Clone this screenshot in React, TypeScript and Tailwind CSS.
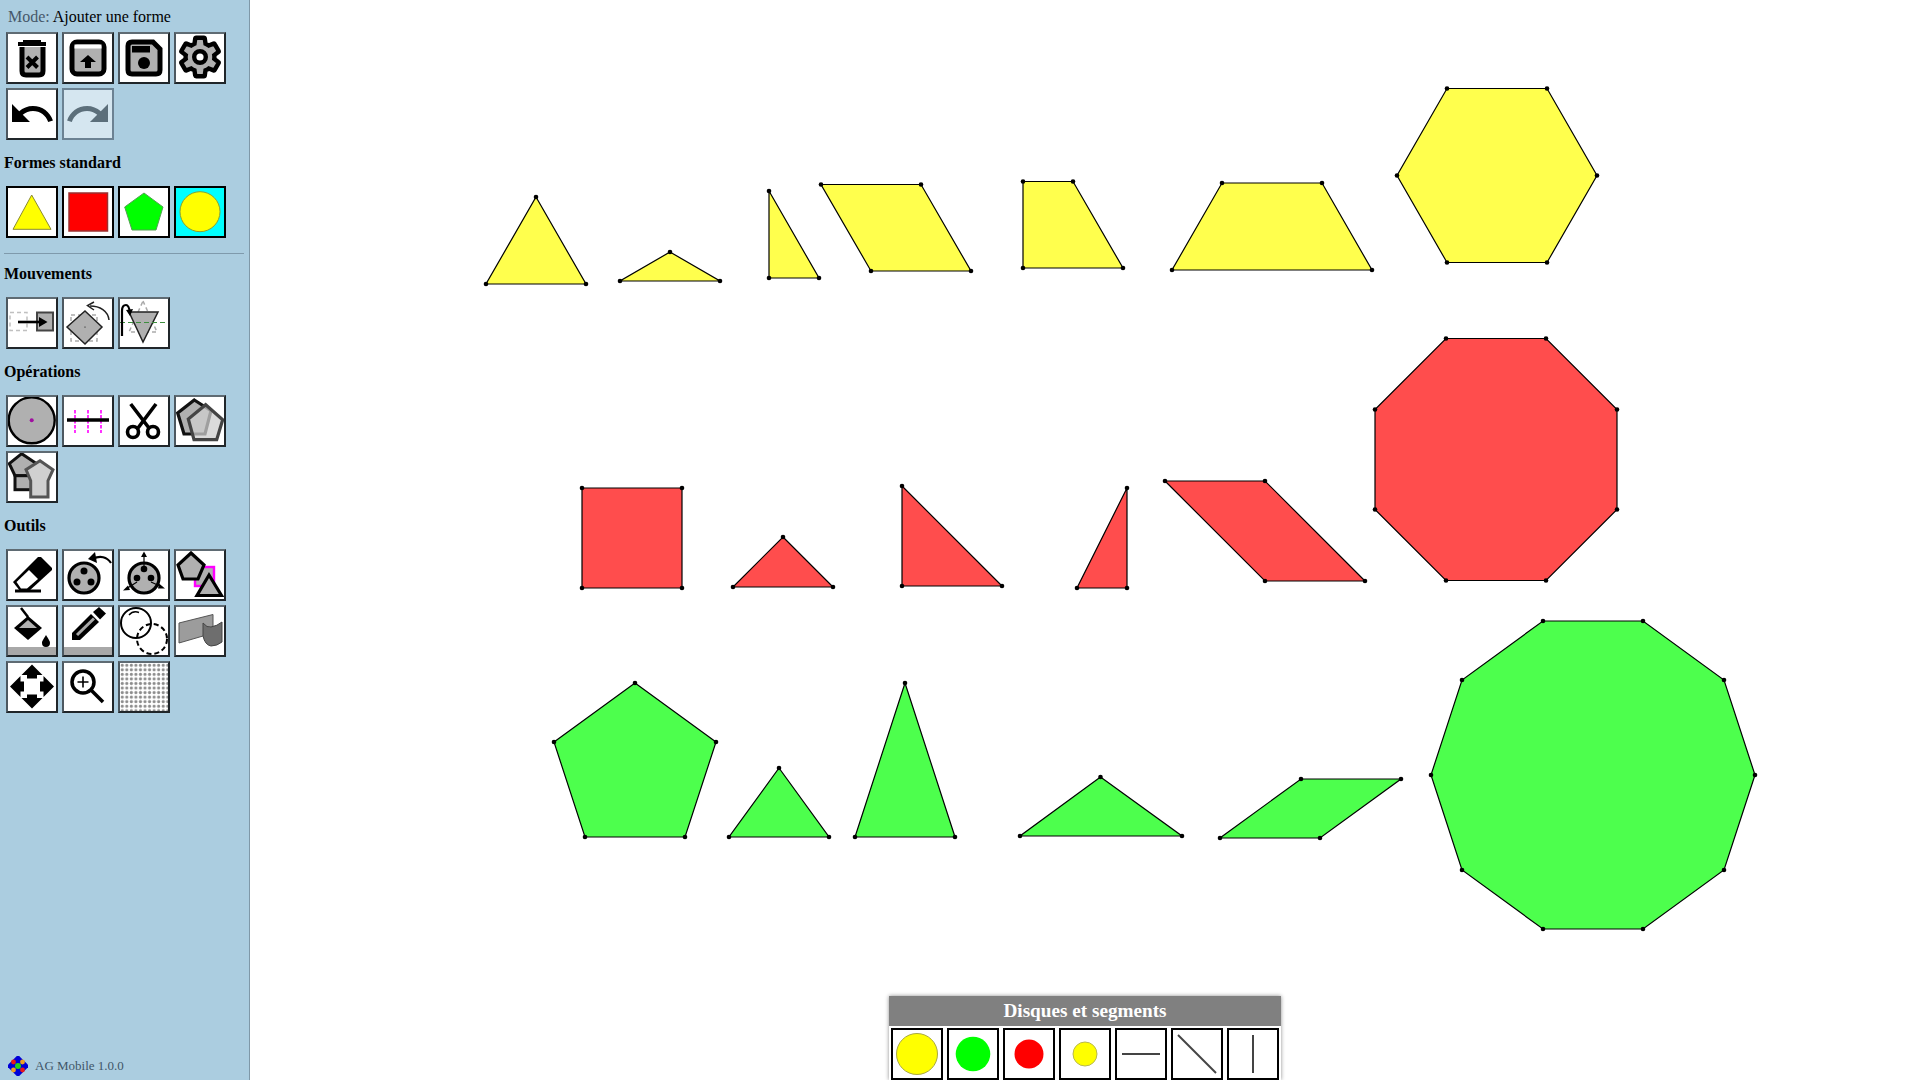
import React from 'react';

type Shape = { color: string; points: [number, number][] };

const YELLOW = '#ffff4d';
const RED = '#ff4d4d';
const GREEN = '#4dff4d';
const GRAY = '#b0b0b0';

const shapes: Shape[] = [
  { color: YELLOW, points: [[536, 197], [586, 284], [486, 284]] },
  { color: YELLOW, points: [[670, 252], [720, 281], [620, 281]] },
  { color: YELLOW, points: [[769, 191], [819, 278], [769, 278]] },
  { color: YELLOW, points: [[821, 184.5], [921, 184.5], [971, 271], [871, 271]] },
  { color: YELLOW, points: [[1023, 181.5], [1073, 181.5], [1123, 268], [1023, 268]] },
  { color: YELLOW, points: [[1222, 183], [1322, 183], [1372, 270], [1172, 270]] },
  { color: YELLOW, points: [[1447, 88.5], [1547, 88.5], [1597, 175.5], [1547, 262.5], [1447, 262.5], [1397, 175.5]] },
  { color: RED, points: [[582, 488], [682, 488], [682, 588], [582, 588]] },
  { color: RED, points: [[783, 537], [833, 587], [733, 587]] },
  { color: RED, points: [[902, 486], [1002, 586], [902, 586]] },
  { color: RED, points: [[1127, 488], [1127, 588], [1077, 588]] },
  { color: RED, points: [[1165, 481], [1265, 481], [1365, 581], [1265, 581]] },
  { color: RED, points: [[1446, 338.5], [1546, 338.5], [1617, 409.5], [1617, 509.5], [1546, 580.5], [1446, 580.5], [1375, 509.5], [1375, 409.5]] },
  { color: GREEN, points: [[635, 683], [716, 742], [685, 837], [585, 837], [554, 742]] },
  { color: GREEN, points: [[779, 768], [829, 837], [729, 837]] },
  { color: GREEN, points: [[905, 683], [955, 837], [855, 837]] },
  { color: GREEN, points: [[1100.5, 777], [1182, 836], [1020, 836]] },
  { color: GREEN, points: [[1301, 779], [1401, 779], [1320, 838], [1220, 838]] },
  { color: GREEN, points: [[1543, 621], [1643, 621], [1724, 680], [1755, 775], [1724, 870], [1643, 929], [1543, 929], [1462, 870], [1431, 775], [1462, 680]] },
];

const Icon = ({ children }: { children: React.ReactNode }) => (
  <svg viewBox="2 2 48 48" className="block w-12 h-12">
    {children}
  </svg>
);

const ToolButton = ({ children, variant = 'tool' }: { children: React.ReactNode; variant?: 'tool' | 'shape' | 'active' | 'off' }) => {
  const look = {
    tool: 'bg-white border-t-[#5f6b73] border-l-[#4d5860] border-r-[#20262a] border-b-[#20262a]',
    shape: 'bg-white border-black',
    active: 'bg-[#00ffff] border-black',
    off: 'bg-[#d5e6f0] border-[#6c8293]',
  }[variant];
  return <button className={`block box-border w-[52px] h-[52px] border-2 p-0 ${look}`}>{children}</button>;
};

const SectionTitle = ({ children }: { children: React.ReactNode }) => (
  <h2 className="h-[46px] flex items-center pl-1 text-base font-bold text-black">{children}</h2>
);

const Row = ({ children }: { children: React.ReactNode }) => (
  <div className="grid grid-cols-[repeat(4,52px)] gap-1 pl-[6px]">{children}</div>
);

const MoveHead = ({ r }: { r: number }) => (
  <polygon points="26,3.5 36.5,14 31,14 31,17.5 21,17.5 21,14 15.5,14" fill="#000" transform={`rotate(${r} 26 25.5)`} />
);

const Logo = () => (
  <svg viewBox="0 0 20 20" className="w-5 h-5 shrink-0">
    <rect x="6" y="0.5" width="8" height="8" fill="#0000d8" transform="rotate(45 10 4.5)" />
    <rect x="6" y="11.5" width="8" height="8" fill="#0000d8" transform="rotate(45 10 15.5)" />
    <rect x="0.5" y="6" width="8" height="8" fill="#0000d8" transform="rotate(45 4.5 10)" />
    <rect x="11.5" y="6" width="8" height="8" fill="#0000d8" transform="rotate(45 15.5 10)" />
    <circle cx="5.5" cy="6" r="2.4" fill="#e81818" />
    <circle cx="14.5" cy="6" r="2.4" fill="#f0a020" />
    <circle cx="5.5" cy="14" r="2.4" fill="#f0a020" />
    <circle cx="14.5" cy="14" r="2.4" fill="#e81818" />
    <circle cx="10" cy="10" r="3" fill="#20d020" />
  </svg>
);

const Sidebar = () => (
  <aside className="w-[250px] h-full shrink-0 flex flex-col bg-[#abcde0] border-r border-[#7f98a8]">
    <div className="h-8 flex items-center pl-2 pt-[2px] text-base text-black">
      <span className="text-[#46586a] mr-[3px]">Mode:</span>Ajouter une forme
    </div>
    <Row>
      <ToolButton>
        <Icon>
          <rect x="12" y="10" width="28" height="4" fill="#000" />
          <rect x="17" y="8" width="18" height="3" fill="#000" />
          <path d="M16 15 V39 Q16 43 20 43 H33 Q37 43 37 39 V15" fill={GRAY} stroke="#000" strokeWidth="5" />
          <path d="M21 25 L31.5 35.5 M31.5 25 L21 35.5" stroke="#000" strokeWidth="4" />
        </Icon>
      </ToolButton>
      <ToolButton>
        <Icon>
          <rect x="10" y="10" width="32" height="32" rx="5" fill={GRAY} stroke="#000" strokeWidth="5" />
          <rect x="12.5" y="12.5" width="27" height="4" fill="#fff" />
          <path d="M18 30 L26 23 L34 30 H29 V36 H23 V30 Z" fill="#000" />
        </Icon>
      </ToolButton>
      <ToolButton>
        <Icon>
          <path d="M14 10 H35 L42 17 V38 Q42 42 38 42 H14 Q10 42 10 38 V14 Q10 10 14 10 Z" fill={GRAY} stroke="#000" strokeWidth="5" />
          <rect x="14" y="14" width="18" height="6.5" fill="#000" />
          <circle cx="26" cy="31" r="6" fill="#000" />
        </Icon>
      </ToolButton>
      <ToolButton>
        <Icon>
          <g transform="translate(2 1) scale(2)">
            <path
              d="M19.14 12.94c.04-.3.06-.61.06-.94 0-.32-.02-.64-.07-.94l2.03-1.58c.18-.14.23-.41.12-.61l-1.92-3.32c-.12-.22-.37-.29-.59-.22l-2.39.96c-.5-.38-1.03-.7-1.62-.94l-.36-2.54c-.04-.24-.24-.41-.48-.41h-3.84c-.24 0-.43.17-.47.41l-.36 2.54c-.59.24-1.13.57-1.62.94l-2.39-.96c-.22-.08-.47 0-.59.22L2.74 8.87c-.12.21-.08.47.12.61l2.03 1.58c-.05.3-.09.63-.09.94s.02.64.07.94l-2.03 1.58c-.18.14-.23.41-.12.61l1.92 3.32c.12.22.37.29.59.22l2.39-.96c.5.38 1.03.7 1.62.94l.36 2.54c.05.24.24.41.48.41h3.84c.24 0 .44-.17.47-.41l.36-2.54c.59-.24 1.13-.56 1.62-.94l2.39.96c.22.08.47 0 .59-.22l1.92-3.32c.12-.22.07-.47-.12-.61l-2.01-1.58z"
              fill={GRAY}
              stroke="#000"
              strokeWidth="2.2"
            />
            <circle cx="12" cy="12" r="2.9" fill="#fff" stroke="#000" strokeWidth="2.2" />
          </g>
        </Icon>
      </ToolButton>
      <ToolButton>
        <Icon>
          <path
            transform="translate(2 2) scale(2)"
            d="M12.5 8c-2.65 0-5.05.99-6.9 2.6L2 7v9h9l-3.62-3.62c1.39-1.16 3.16-1.88 5.12-1.88 3.54 0 6.55 2.31 7.6 5.5l2.37-.78C21.08 11.03 17.15 8 12.5 8z"
            fill="#000"
          />
        </Icon>
      </ToolButton>
      <ToolButton variant="off">
        <Icon>
          <path
            transform="translate(2 2) scale(2)"
            d="M18.4 10.6C16.55 8.99 14.15 8 11.5 8c-4.65 0-8.58 3.03-9.96 7.22L3.9 16c1.05-3.19 4.05-5.5 7.6-5.5 1.95 0 3.73.72 5.12 1.88L13 16h9V7l-3.6 3.6z"
            fill="#5c6f7b"
          />
        </Icon>
      </ToolButton>
    </Row>

    <SectionTitle>Formes standard</SectionTitle>
    <Row>
      <ToolButton variant="shape">
        <Icon>
          <polygon points="25.7,9 7,43.3 45,43.3" fill="#ffff00" stroke="#8a8a30" strokeWidth="1" />
        </Icon>
      </ToolButton>
      <ToolButton variant="shape">
        <Icon>
          <rect x="7" y="7" width="38.5" height="38" fill="#ff0000" stroke="#9a3030" strokeWidth="1.5" />
        </Icon>
      </ToolButton>
      <ToolButton variant="shape">
        <Icon>
          <polygon points="26,7 45,21 38,44 14,44 6.7,21" fill="#00ff00" stroke="#50a050" strokeWidth="1" />
        </Icon>
      </ToolButton>
      <ToolButton variant="active">
        <Icon>
          <circle cx="26" cy="25.7" r="20" fill="#ffff00" stroke="#8aa030" strokeWidth="1" />
        </Icon>
      </ToolButton>
    </Row>
    <div className="h-px mt-[15px] ml-1 mr-[5px] bg-[#7f9aac]" />

    <h2 className="h-[43px] flex items-center pl-1 pb-[3px] text-base font-bold text-black">Mouvements</h2>
    <Row>
      <ToolButton>
        <Icon>
          <rect x="4" y="15.5" width="17" height="18" fill="none" stroke="#c0c0c0" strokeWidth="1.5" strokeDasharray="4 3" />
          <rect x="31" y="15.5" width="16" height="18" fill={GRAY} stroke="#444" strokeWidth="2" />
          <path d="M12 25 H36" stroke="#000" strokeWidth="2.6" />
          <polygon points="33,20 33,30 41.5,25" fill="#000" />
        </Icon>
      </ToolButton>
      <ToolButton>
        <Icon>
          <rect x="9" y="18" width="26" height="26" fill="none" stroke="#aaa" strokeWidth="1.5" strokeDasharray="4 3" />
          <polygon points="23,14 40,30 23,47 5,30" fill={GRAY} stroke="#222" strokeWidth="1.5" />
          <circle cx="23" cy="30" r="0.6" fill="#000" />
          <path d="M47 23 C46 14 38 9 28 9" fill="none" stroke="#222" strokeWidth="1.5" />
          <path d="M32 5 L25.5 8.5 L32 13" fill="none" stroke="#222" strokeWidth="1.5" />
        </Icon>
      </ToolButton>
      <ToolButton>
        <Icon>
          <polygon points="25,4 39,35 11,35" fill="none" stroke="#aaa" strokeWidth="1.5" strokeDasharray="4 3" />
          <polygon points="11,15 40,15 25,45" fill={GRAY} stroke="#222" strokeWidth="1.5" />
          <path d="M2 25.5 H48" stroke="#3e8e3e" strokeWidth="1.2" strokeDasharray="5 3" />
          <path d="M4 39 V14 Q4 8 8 8 Q11 8 12 16" fill="none" stroke="#000" strokeWidth="2.2" />
          <polygon points="8,13 15,12 12,19" fill="#000" />
        </Icon>
      </ToolButton>
    </Row>

    <SectionTitle>Opérations</SectionTitle>
    <Row>
      <ToolButton>
        <Icon>
          <circle cx="25.7" cy="25.3" r="23" fill={GRAY} stroke="#000" strokeWidth="2.4" />
          <circle cx="25.7" cy="25.3" r="2" fill="#a010a0" />
        </Icon>
      </ToolButton>
      <ToolButton>
        <Icon>
          <path d="M13 15 V38 M26 15 V38 M39 15 V38" stroke="#ff00ff" strokeWidth="1.6" strokeDasharray="3.5 1.5" />
          <path d="M5 25 H47" stroke="#000" strokeWidth="3.4" />
        </Icon>
      </ToolButton>
      <ToolButton>
        <Icon>
          <path d="M12.7 9 L31 33 M38 9 L20 33" stroke="#000" strokeWidth="3.6" />
          <circle cx="15" cy="37" r="5.5" fill="#fff" stroke="#000" strokeWidth="3.6" />
          <circle cx="35" cy="37" r="5.5" fill="#fff" stroke="#000" strokeWidth="3.6" />
        </Icon>
      </ToolButton>
      <ToolButton>
        <Icon>
          <polygon points="20.3,5 37,15.7 31,39 10,39 3.7,18" fill={GRAY} stroke="#111" strokeWidth="3.2" />
          <polygon points="31.7,9.7 48.7,24.7 42.7,44.7 20,44.7 14.3,24" fill="#cfcfcf" fillOpacity="0.75" stroke="#444" strokeWidth="3.2" />
        </Icon>
      </ToolButton>
      <ToolButton>
        <Icon>
          <polygon points="15.7,2.7 30.7,12.7 25.7,24.7 9,24.7 3.3,12.7" fill={GRAY} stroke="#111" strokeWidth="3" />
          <rect x="9" y="24.7" width="16.7" height="14" fill={GRAY} stroke="#111" strokeWidth="3" />
          <polygon points="34,9.7 47,18.7 42,29.7 42,46 24.7,46 24.7,29.7 20,18.7" fill="#d0d0d0" stroke="#555" strokeWidth="3" />
        </Icon>
      </ToolButton>
    </Row>

    <SectionTitle>Outils</SectionTitle>
    <Row>
      <ToolButton>
        <Icon>
          <polygon points="7,33 32,8 35,8 46,19 46,21 22,43 14,42" fill="#000" />
          <polygon points="10.5,33 23,21 32,30 21,39.5 15,39.5" fill="#fff" />
          <path d="M9 42 H35" stroke="#000" strokeWidth="3" />
        </Icon>
      </ToolButton>
      <ToolButton>
        <Icon>
          <circle cx="22" cy="29" r="15" fill={GRAY} stroke="#000" strokeWidth="3.2" />
          <circle cx="22" cy="22" r="3.5" fill="#000" />
          <circle cx="15" cy="33" r="3.5" fill="#000" />
          <circle cx="29" cy="33" r="3.5" fill="#000" />
          <path d="M49 14 C45 8 38 6 31 10" fill="none" stroke="#000" strokeWidth="2.2" />
          <polygon points="26,10 33,3 35,14" fill="#000" />
        </Icon>
      </ToolButton>
      <ToolButton>
        <Icon>
          <circle cx="26" cy="29" r="15" fill={GRAY} stroke="#000" strokeWidth="3.2" />
          <circle cx="26" cy="20" r="3.3" fill="#000" />
          <circle cx="19" cy="29" r="3.3" fill="#000" />
          <circle cx="33" cy="29" r="3.3" fill="#000" />
          <path d="M26 20 V5 M19 33 L8 40 M33 33 L44 38" stroke="#000" strokeWidth="1.2" />
          <polygon points="26,2.5 23,8 29,8" fill="#000" />
          <polygon points="5,41.5 10,36.5 12,41" fill="#000" />
          <polygon points="47,39.5 41,34.5 40,39.5" fill="#000" />
        </Icon>
      </ToolButton>
      <ToolButton>
        <Icon>
          <rect x="21" y="18" width="19" height="19" fill={GRAY} stroke="#ff00ff" strokeWidth="2.4" />
          <polygon points="17,4 30,16 24,30 9,30 4,16" fill={GRAY} stroke="#000" strokeWidth="3.2" />
          <polygon points="35,26 47.5,46.5 23,46.5" fill={GRAY} stroke="#000" strokeWidth="3.2" />
        </Icon>
      </ToolButton>
      <ToolButton>
        <div className="relative w-full h-full">
          <Icon>
            <path d="M15 3 L22 12" stroke="#000" strokeWidth="2.5" />
            <polygon points="22,11 36,23 22,35 8,23" fill="#000" />
            <polygon points="22,15 31,23 13,23" fill={GRAY} />
            <path d="M40 30 C37 35 36 36 36 38 A4 4 0 0 0 44 38 C44 36 43 35 40 30 Z" fill="#000" />
          </Icon>
          <div className="absolute inset-x-0 bottom-0 h-[8px] bg-[#a8a8a8]" />
        </div>
      </ToolButton>
      <ToolButton>
        <div className="relative w-full h-full">
          <Icon>
            <polygon points="10,35 10,28 29,9 37,17 18,35" fill="#000" />
            <path d="M15 30 L32 13.5" stroke="#a8a8a8" strokeWidth="3" />
            <polygon points="31,7 37,2 44,8.5 38,14.5" fill="#000" />
          </Icon>
          <div className="absolute inset-x-0 bottom-0 h-[8px] bg-[#a8a8a8]" />
        </div>
      </ToolButton>
      <ToolButton>
        <Icon>
          <circle cx="18" cy="18" r="15" fill="none" stroke="#000" strokeWidth="2" />
          <path d="M11 10 A9 9 0 0 1 21 7.5" fill="none" stroke="#000" strokeWidth="1.4" />
          <circle cx="34" cy="34" r="15" fill="none" stroke="#000" strokeWidth="2" strokeDasharray="5 3" />
        </Icon>
      </ToolButton>
      <ToolButton>
        <Icon>
          <polygon points="5,18 39,9.5 39,24 29,31 5,38" fill="#9c9c9c" stroke="#555" strokeWidth="1" />
          <path d="M29 18 Q33 23 37 22 Q43 21 48 17 V37 Q43 41 37 41 Q31 40 29 31 Z" fill="#6e6e6e" stroke="#444" strokeWidth="1" />
        </Icon>
      </ToolButton>
      <ToolButton>
        <Icon>
          <MoveHead r={0} />
          <MoveHead r={90} />
          <MoveHead r={180} />
          <MoveHead r={270} />
        </Icon>
      </ToolButton>
      <ToolButton>
        <Icon>
          <path d="M29 29 L41 41" stroke="#000" strokeWidth="3.5" />
          <circle cx="21" cy="21" r="11" fill="#fff" stroke="#000" strokeWidth="3.5" />
          <path d="M15.5 21 H26.5 M21 15.5 V26.5" stroke="#000" strokeWidth="1.6" />
        </Icon>
      </ToolButton>
      <ToolButton>
        <Icon>
          <defs>
            <pattern id="dots" x="2" y="2" width="4.55" height="4.55" patternUnits="userSpaceOnUse">
              <circle cx="2.27" cy="2.27" r="1.55" fill="#8c8c8c" />
            </pattern>
          </defs>
          <rect x="2" y="2" width="48" height="48" fill="url(#dots)" />
        </Icon>
      </ToolButton>
    </Row>

    <div className="mt-auto flex items-center gap-[7px] pl-2 pb-[4px] text-[13px] text-[#3f5668]">
      <Logo />
      <span>AG Mobile 1.0.0</span>
    </div>
  </aside>
);

const Canvas = () => (
  <svg viewBox="250 0 1670 1080" className="block w-full h-full">
    {shapes.map((s, i) => (
      <g key={i}>
        <polygon points={s.points.map((p) => p.join(',')).join(' ')} fill={s.color} stroke="#000" strokeWidth="1.2" />
        {s.points.map((p, j) => (
          <circle key={j} cx={p[0]} cy={p[1]} r="2.3" fill="#000" />
        ))}
      </g>
    ))}
  </svg>
);

const BottomPanel = () => (
  <div className="absolute left-[639px] bottom-0 w-[392px] h-[84px] bg-white shadow-[0_0_4px_rgba(0,0,0,0.45)]">
    <div className="h-[30px] flex items-center justify-center bg-[#808080] text-[19.2px] font-bold text-white">Disques et segments</div>
    <div className="flex gap-1 pl-[2px] pt-[2px]">
      <ToolButton variant="shape">
        <Icon>
          <circle cx="26" cy="26" r="20.5" fill="#ffff00" stroke="#a8a840" strokeWidth="1" />
        </Icon>
      </ToolButton>
      <ToolButton variant="shape">
        <Icon>
          <circle cx="26" cy="26" r="17.3" fill="#00ff00" />
        </Icon>
      </ToolButton>
      <ToolButton variant="shape">
        <Icon>
          <circle cx="26" cy="26" r="14.5" fill="#ff0000" />
        </Icon>
      </ToolButton>
      <ToolButton variant="shape">
        <Icon>
          <circle cx="26" cy="26" r="12" fill="#ffff00" stroke="#b8b850" strokeWidth="1" />
        </Icon>
      </ToolButton>
      <ToolButton variant="shape">
        <Icon>
          <path d="M7 26 H45" stroke="#444" strokeWidth="2" />
        </Icon>
      </ToolButton>
      <ToolButton variant="shape">
        <Icon>
          <path d="M7 7 L45 45" stroke="#444" strokeWidth="2" />
        </Icon>
      </ToolButton>
      <ToolButton variant="shape">
        <Icon>
          <path d="M26 7 V45" stroke="#444" strokeWidth="2" />
        </Icon>
      </ToolButton>
    </div>
  </div>
);

export default function App() {
  return (
    <div className="flex w-screen h-screen overflow-hidden bg-white font-['Liberation_Serif',serif]">
      <Sidebar />
      <main className="relative flex-1 h-full">
        <Canvas />
        <BottomPanel />
      </main>
    </div>
  );
}
